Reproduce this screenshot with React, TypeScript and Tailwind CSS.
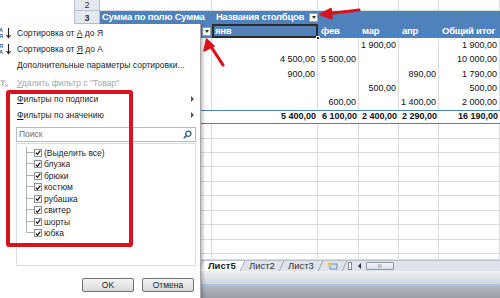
import React from 'react';

const W = ['w-[75px]', 'w-[25px]', 'w-[112px]', 'w-[106px]', 'w-[41px]', 'w-[40px]', 'w-[40px]', 'w-[61px]'];

const data: string[][] = [
  ['', '', '1 900,00', '', '1 900,00'],
  ['4 500,00', '5 500,00', '', '', '10 000,00'],
  ['900,00', '', '', '890,00', '1 790,00'],
  ['', '', '500,00', '', '500,00'],
  ['', '600,00', '', '1 400,00', '2 000,00'],
];
const dataH = ['h-[15px]', 'h-[14px]', 'h-[15px]', 'h-[14px]', 'h-[14px]'];
const totals = ['5 400,00', '6 100,00', '2 400,00', '2 290,00', '16 190,00'];
const emptyH = ['h-[15px]', 'h-[14px]', 'h-[14px]', 'h-[15px]', 'h-[14px]', 'h-[15px]', 'h-[14px]', 'h-[15px]', 'h-[14px]', 'h-[6px]'];

const items = ['(Выделить все)', 'блузка', 'брюки', 'костюм', 'рубашка', 'свитер', 'шорты', 'юбка'];

const cellFont = "font-['Liberation_Sans',sans-serif] text-[9px]";
const menuFont = "font-['Liberation_Sans',sans-serif] text-[8.5px]";
const headFont = 'text-white font-bold text-[9.5px] tracking-[-0.25px]';

function DropBtn() {
  return (
    <div className="w-[9px] h-[9px] shrink-0 bg-white border border-[#9aa3ad] flex items-center justify-center">
      <div className="w-0 h-0 border-l-[2.5px] border-r-[2.5px] border-t-[3px] border-l-transparent border-r-transparent border-t-[#333]" />
    </div>
  );
}

// row numbers under the filter menu are hidden, so only rows 2 and 3 carry a label
function RowHead({ n }: { n?: number }) {
  return (
    <div className={`${W[1]} h-full bg-[#e4e9f0] border-r border-b border-[#b4c0d0] flex items-end justify-center text-[#333] text-[9px]`}>
      {n && <span className="leading-[10px]">{n}</span>}
    </div>
  );
}

function Blank({ i }: { i: number }) {
  return <div className={`${W[i]} h-full border-r border-b border-[#dadcdf]`} />;
}

function SortIcon({ top, bottom }: { top: string; bottom: string }) {
  return (
    <svg width="13" height="12" viewBox="0 0 13 12" className="shrink-0">
      <text x="-1" y="5" fontSize="5.5" fontFamily="Liberation Sans" fontWeight="bold" fill="#3a5a8a">{top}</text>
      <text x="-1" y="11" fontSize="5.5" fontFamily="Liberation Sans" fontWeight="bold" fill="#3a5a8a">{bottom}</text>
      <path d="M8.5 1 V10 M6.5 8 L8.5 10.5 L10.5 8" stroke="#222" strokeWidth="1.1" fill="none" />
    </svg>
  );
}

function MenuItem({ icon, children, disabled, arrow, className = '' }: { icon?: React.ReactNode; children: React.ReactNode; disabled?: boolean; arrow?: boolean; className?: string }) {
  return (
    <div className={`h-[16px] flex items-center ${className}`}>
      <div className="w-[17px] flex items-center">{icon}</div>
      <span className={`flex-1 ${disabled ? 'text-[#a6a6a6]' : 'text-[#1e1e1e]'}`}>{children}</span>
      {arrow && <div className="mr-[6px] w-0 h-0 border-t-[3px] border-b-[3px] border-l-[3px] border-t-transparent border-b-transparent border-l-[#555]" />}
    </div>
  );
}

function Check() {
  return (
    <div className="w-[8px] h-[8px] border border-[#8e8f8f] bg-white flex items-center justify-center shrink-0">
      <svg width="7" height="7" viewBox="0 0 7 7">
        <path d="M1 3.6 L2.8 5.6 L6.2 1.2" stroke="#111" strokeWidth="1.4" fill="none" />
      </svg>
    </div>
  );
}

function FilterMenu() {
  return (
    <div className={`absolute left-0 top-[24px] w-[201px] bottom-0 bg-white border-r border-[#a8a8a8] shadow-[2px_2px_3px_rgba(0,0,0,0.25)] flex flex-col pt-[1px] ${menuFont}`}>
      <MenuItem icon={<SortIcon top="А" bottom="Я" />}>Сортировка от <u>А</u> до Я</MenuItem>
      <MenuItem icon={<SortIcon top="Я" bottom="А" />}>Сортировка от <u>Я</u> до А</MenuItem>
      <MenuItem><u>Д</u>ополнительные параметры сортировки...</MenuItem>
      <MenuItem
        className="mt-[2px]"
        disabled
        icon={
          <svg width="9" height="9" viewBox="0 0 9 9">
            <path d="M0 1 H6 L3.8 4 V8 L2.2 7 V4 Z" fill="#c8c8c8" />
            <path d="M5 5 L8 8 M8 5 L5 8" stroke="#b0b0b0" strokeWidth="1" />
          </svg>
        }
      >
        <u>У</u>далить фильтр с "Товар"
      </MenuItem>
      <MenuItem arrow><u>Ф</u>ильтры по подписи</MenuItem>
      <MenuItem arrow><u>Ф</u>ильтры по значению</MenuItem>
      <div className="mt-[4px] ml-[16px] w-[180px] h-[15px] border border-[#b5bcc7] flex items-center justify-between pl-[2px] pr-[3px]">
        <span className="text-[#6f6f6f]">Поиск</span>
        <svg width="9" height="9" viewBox="0 0 9 9">
          <circle cx="5.3" cy="3.7" r="2.6" stroke="#2d5c8f" strokeWidth="1.3" fill="none" />
          <path d="M3.4 5.6 L0.8 8.2" stroke="#2d5c8f" strokeWidth="1.6" />
        </svg>
      </div>
      <div className="mt-[1px] ml-[16px] w-[180px] h-[123px] border border-[#d7dde4] pt-[3px] pl-[9px]">
        {items.map((t, i) => (
          <div key={t} className="h-[11.5px] flex items-center">
            <div className="w-[8px] h-full flex flex-col shrink-0">
              <div className="h-1/2 border-b border-l border-[#b0b0b0]" />
              <div className={`h-1/2 ${i < items.length - 1 ? 'border-l border-[#b0b0b0]' : ''}`} />
            </div>
            <Check />
            <span className="ml-[2px] text-[#1e1e1e] leading-none">{t}</span>
          </div>
        ))}
      </div>
      <div className="mt-[12px] flex justify-end gap-[8px] pr-[6px]">
        <div className="w-[52px] h-[14px] rounded-[2px] border border-[#707070] bg-gradient-to-b from-[#f4f4f4] to-[#d9d9d9] flex items-center justify-center text-[#1e1e1e]">OK</div>
        <div className="w-[52px] h-[14px] rounded-[2px] border border-[#707070] bg-gradient-to-b from-[#f4f4f4] to-[#d9d9d9] flex items-center justify-center text-[#1e1e1e]">Отмена</div>
      </div>
    </div>
  );
}

function Overlays() {
  return (
    <>
      <div className="absolute left-[6px] top-[90px] w-[127px] h-[157px] border-[4px] border-[#d8121f] rounded-[3px]" />
      <svg className="absolute left-0 top-0" width="500" height="298" viewBox="0 0 500 298">
        <path d="M223 65 L210 45" stroke="#d8121f" strokeWidth="3.2" strokeLinecap="round" />
        <path d="M206.5 39 L204 51 L214 46 Z" fill="#d8121f" stroke="#d8121f" strokeWidth="1.5" strokeLinejoin="round" />
        <path d="M359 10 L330 13.5" stroke="#d8121f" strokeWidth="3.2" strokeLinecap="round" />
        <path d="M320 14.5 L331 8.5 L332 19 Z" fill="#d8121f" stroke="#d8121f" strokeWidth="1.5" strokeLinejoin="round" />
      </svg>
    </>
  );
}

export default function App() {
  return (
    <div className={`relative w-[500px] h-[298px] overflow-hidden bg-white ${cellFont}`}>
      <div className="flex flex-col">
        <div className="flex h-[11px]">
          <div className={`${W[0]} h-full border-r border-[#b4c0d0]`} />
          <RowHead n={2} />
          {[2, 3, 4, 5, 6, 7].map(i => <Blank key={i} i={i} />)}
        </div>
        <div className={`flex h-[13px] ${headFont}`}>
          <div className={`${W[0]} h-full border-r border-[#b4c0d0]`} />
          <RowHead n={3} />
          <div className={`${W[2]} h-full bg-[#4f81bd] flex items-center pl-[2px] whitespace-nowrap`}>Сумма по полю Сумма</div>
          <div className={`${W[3]} h-full bg-[#4f81bd] flex items-center justify-between pl-[4px]`}>
            <span className="whitespace-nowrap">Названия столбцов</span>
            <DropBtn />
          </div>
          <div className="flex-1 h-full bg-[#4f81bd]" />
        </div>
        <div className={`flex h-[14px] ${headFont}`}>
          <div className={`${W[0]} h-full`} />
          <RowHead />
          <div className={`${W[2]} h-full bg-[#4f81bd] flex items-center justify-end pr-[1px]`}>
            <DropBtn />
          </div>
          <div className={`${W[3]} h-full bg-[#4f81bd] shadow-[inset_0_0_0_2px_#2e2a26] flex items-center pl-[3px] relative`}>
            янв
            <div className="absolute right-[-2px] bottom-[-2px] w-[4px] h-[4px] bg-[#2e2a26] border border-white" />
          </div>
          <div className={`${W[4]} h-full bg-[#4f81bd] flex items-center pl-[3px]`}>фев</div>
          <div className={`${W[5]} h-full bg-[#4f81bd] flex items-center pl-[3px]`}>мар</div>
          <div className={`${W[6]} h-full bg-[#4f81bd] flex items-center pl-[3px]`}>апр</div>
          <div className={`${W[7]} h-full bg-[#4f81bd] flex items-center pl-[3px] whitespace-nowrap`}>Общий итог</div>
        </div>
        {data.map((r, ri) => (
          <div key={ri} className={`flex ${dataH[ri]} text-[#111]`}>
            <div className={`${W[0]} h-full`} />
            <RowHead />
            <div className={`${W[2]} h-full border-r border-[#dadcdf]`} />
            {r.map((v, ci) => (
              <div key={ci} className={`${W[3 + ci]} h-full border-r border-[#dadcdf] flex items-center justify-end pr-[2px] whitespace-nowrap`}>{v}</div>
            ))}
          </div>
        ))}
        <div className="flex h-[14px] text-[#111] font-bold">
          <div className={`${W[0]} h-full`} />
          <RowHead />
          <div className={`${W[2]} h-full border-t border-b border-[#4f81bd]`} />
          {totals.map((v, ci) => (
            <div key={ci} className={`${W[3 + ci]} h-full border-t border-b border-[#4f81bd] flex items-center justify-end pr-[2px] whitespace-nowrap`}>{v}</div>
          ))}
        </div>
        {emptyH.map((h, ri) => (
          <div key={ri} className={`flex ${h}`}>
            <div className={`${W[0]} h-full`} />
            <RowHead />
            {[2, 3, 4, 5, 6, 7].map(i => <Blank key={i} i={i} />)}
          </div>
        ))}
        {/* sheet tabs */}
        <div className="h-[11px] bg-[#dfe4eb] border-t border-[#b8c2cf] flex items-stretch pl-[202px] text-[9.5px]">
          <div className="bg-white px-[6px] flex items-center font-bold text-[#222] border-r border-[#9aa5b2] -skew-x-[25deg]">
            <span className="skew-x-[25deg]">Лист5</span>
          </div>
          <div className="px-[6px] flex items-center text-[#333] border-r border-[#9aa5b2] -skew-x-[25deg]">
            <span className="skew-x-[25deg]">Лист2</span>
          </div>
          <div className="px-[6px] flex items-center text-[#333] border-r border-[#9aa5b2] -skew-x-[25deg]">
            <span className="skew-x-[25deg]">Лист3</span>
          </div>
          <div className="px-[6px] flex items-center border-r border-[#9aa5b2] -skew-x-[25deg]">
            <svg width="11" height="8" viewBox="0 0 11 8" className="skew-x-[25deg]">
              <rect x="3" y="2" width="7" height="5" fill="#cfe0f4" stroke="#5b7fa8" strokeWidth="0.8" />
              <circle cx="2.5" cy="2" r="1.8" fill="#f5c542" />
            </svg>
          </div>
          <div className="ml-[3px] my-[1px] w-[4px] bg-white border border-[#7d8896]" />
          <div className="ml-[6px] flex items-center">
            <div className="w-0 h-0 border-t-[3px] border-b-[3px] border-r-[3px] border-t-transparent border-b-transparent border-r-[#333]" />
          </div>
          <div className="ml-[5px] my-[1px] w-[28px] rounded-[1px] border border-[#8c96a2] bg-gradient-to-b from-[#f4f6f9] to-[#dde2e9] flex items-center justify-center">
            <span className="text-[5px] text-[#777] leading-none">III</span>
          </div>
        </div>
        <div className="h-[13px] bg-gradient-to-b from-[#eef1f5] to-[#cfd6df]" />
        <div className="h-[2px] bg-[#a9c3e2]" />
        <div className="h-[13px] bg-gradient-to-b from-[#b3b8be] to-[#969ca3]" />
      </div>
      <FilterMenu />
      <Overlays />
    </div>
  );
}
